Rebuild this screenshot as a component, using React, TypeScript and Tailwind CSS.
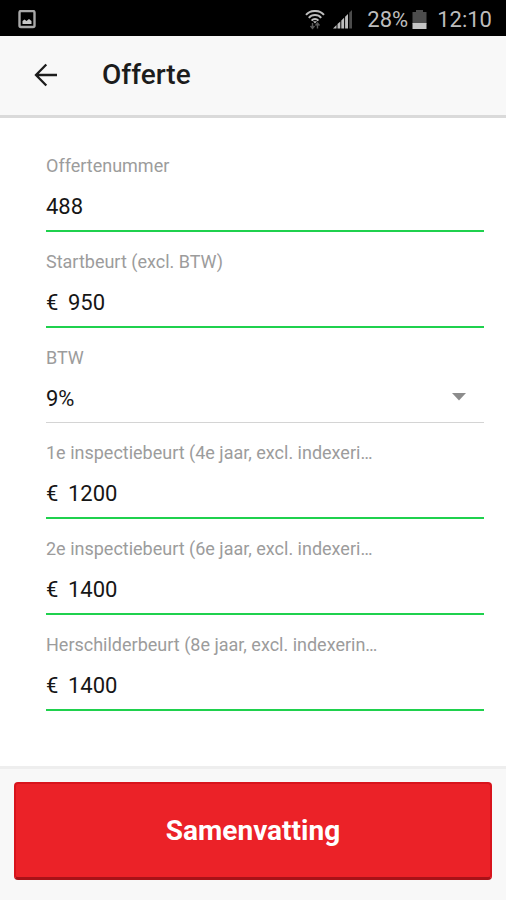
import React, { useState } from 'react';

type Field = {
    id: string;
    label: string;
    value: string;
    prefix?: string;
    options?: string[];
};

const FIELDS: Field[] = [
    { id: 'number', label: 'Offertenummer', value: '488' },
    { id: 'start', label: 'Startbeurt (excl. BTW)', value: '950', prefix: '€' },
    { id: 'vat', label: 'BTW', value: '9%', options: ['0%', '9%', '21%'] },
    { id: 'first', label: '1e inspectiebeurt (4e jaar, excl. indexeri…', value: '1200', prefix: '€' },
    { id: 'second', label: '2e inspectiebeurt (6e jaar, excl. indexeri…', value: '1400', prefix: '€' },
    { id: 'repaint', label: 'Herschilderbeurt (8e jaar, excl. indexerin…', value: '1400', prefix: '€' },
];

const StatusBar: React.FC = () => (
    <div className="flex h-9 items-center justify-between bg-black pl-[18px] pr-[14px] pt-1 text-[#bdbdbd]">
        <svg width="18" height="20" viewBox="0 0 18 20" fill="none">
            <rect x="1.5" y="1" width="15" height="16" rx="1.5" stroke="#a8a8a8" strokeWidth="2.4" />
            <path d="M4.5 14v-3l2-1.5 2 1.500 2.500-2 2.500 2V14z" fill="#c8c8c8" />
        </svg>
        <div className="flex items-center">
            <svg width="20" height="20" viewBox="0 0 20 20" fill="none">
                <g stroke="#bdbdbd" strokeWidth="2">
                    <path d="M1 4.800C5.600-.300 14.400-.300 19 4.800" />
                    <path d="M3.800 7.800c3.200-3.600 9.200-3.600 12.400 0" />
                    <path d="M6.600 10.600c1.800-2 5-2 6.800 0" />
                </g>
                <path d="M8 11.200h4l-2 2.400z" fill="#bdbdbd" />
                <path d="M7.500 13v5M5.500 16l2 2.400 2-2.400M12.500 18.500v-5M10.500 15.500l2-2.400 2 2.400" stroke="#5a5a5a" strokeWidth="1.4" />
            </svg>
            <svg className="ml-2" width="20" height="20" viewBox="0 0 20 20">
                <g fill="#bdbdbd">
                    <path d="M0 18.500l3.500-3.500v3.500z" />
                    <path d="M4.500 14l2.800-2.500v7H4.500z" />
                    <path d="M8.300 10.500l2.800-2.800v10.800H8.300z" />
                    <path d="M12.100 6.800L15 4v14.500h-2.900z" />
                </g>
                <path d="M16.200 2.800L19 0v18.500h-2.800z" fill="#4c4c4c" />
            </svg>
            <span className="ml-[14px] text-[22px] leading-8">28%</span>
            <svg className="ml-1" width="15" height="20" viewBox="0 0 15 20">
                <path d="M4 0h7v2h3.500v12H.500V2H4z" fill="#4c4c4c" />
                <path d="M.500 13h14v6H.500z" fill="#c4c4c4" />
            </svg>
            <span className="ml-[10px] text-[22px] leading-8">12:10</span>
        </div>
    </div>
);

const FormField: React.FC<{ field: Field }> = ({ field }) => {
    const [value, setValue] = useState(field.value);

    return (
        <div className={field.options ? 'border-b border-[#d4d4d4] pb-[7px] pt-[18px]' : 'border-b-2 border-[#1fd14d] pb-[7px] pt-[18px]'}>
            <label htmlFor={field.id} className="block truncate text-lg leading-6 text-[#9c9c9c]">
                {field.label}
            </label>
            <div className="relative mt-[13px] flex h-8 items-center text-[22px] leading-8 text-[#161616]">
                {field.prefix && <span className="w-[22px] shrink-0">{field.prefix}</span>}
                {field.options ? (
                    <>
                        <select
                            id={field.id}
                            value={value}
                            onChange={(e) => setValue(e.target.value)}
                            className="h-8 w-full appearance-none bg-transparent outline-none"
                        >
                            {field.options.map((option) => (
                                <option key={option} value={option}>{option}</option>
                            ))}
                        </select>
                        <svg className="pointer-events-none absolute right-[18px] top-[10px]" width="14" height="8" viewBox="0 0 14 8">
                            <path d="M0 0h14L7 7.500z" fill="#8c8c8c" />
                        </svg>
                    </>
                ) : (
                    <input
                        id={field.id}
                        type="text"
                        inputMode="numeric"
                        value={value}
                        onChange={(e) => setValue(e.target.value)}
                        className="h-8 w-full min-w-0 bg-transparent outline-none"
                    />
                )}
            </div>
        </div>
    );
};

const App: React.FC = () => {
    return (
        <div className="flex min-h-screen flex-col bg-white font-['Roboto',sans-serif]">
            <StatusBar />
            <header className="flex h-[82px] items-center border-b-[3px] border-[#dadada] bg-[#f8f8f8] pb-0.5 pl-[34px]">
                <button type="button" aria-label="Terug" className="flex h-6 w-6 items-center justify-center">
                    <svg width="24" height="24" viewBox="0 0 24 24" fill="none" stroke="#1c1c1c" strokeWidth="2.3">
                        <path d="M12.300 1.500L2 12l10.300 10.500M2.300 12H23" />
                    </svg>
                </button>
                <h1 className="ml-11 text-[28px] font-medium leading-8 text-[#1c1c1c]">Offerte</h1>
            </header>
            <main className="flex-1 pb-6 pl-[46px] pr-[22px] pt-[18px]">
                {FIELDS.map((field) => (
                    <FormField key={field.id} field={field} />
                ))}
            </main>
            <footer className="border-t-[3px] border-[#eeeeee] bg-[#f8f8f8] px-[14px] pb-5 pt-[13px]">
                <button
                    type="button"
                    className="h-[98px] w-full rounded border-2 border-b-[3px] border-[#d8141c] border-b-[#a81218] bg-[#eb2228] text-[28px] font-bold leading-8 text-white"
                >
                    Samenvatting
                </button>
            </footer>
        </div>
    );
};
export default App;
